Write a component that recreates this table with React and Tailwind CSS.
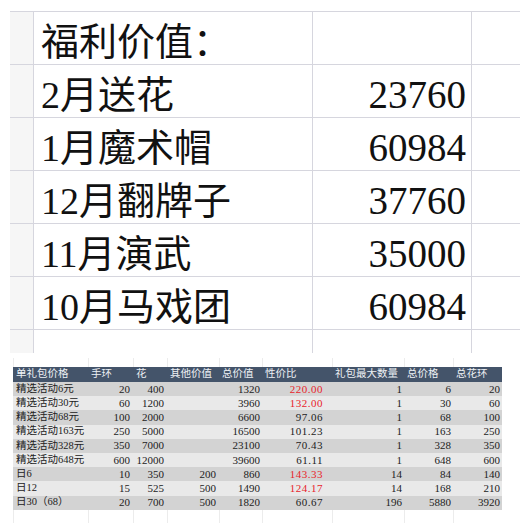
import React from 'react'

const welfare = [
  { name: '福利价值：', value: '' },
  { name: '2月送花', value: '23760' },
  { name: '1月魔术帽', value: '60984' },
  { name: '12月翻牌子', value: '37760' },
  { name: '11月演武', value: '35000' },
  { name: '10月马戏团', value: '60984' },
]

const headers = ['单礼包价格', '手环', '花', '其他价值', '总价值', '性价比', '礼包最大数量', '总价格', '总花环']

const rows = [
  ['精选活动6元', '20', '400', '', '1320', '220.00', '1', '6', '20', true],
  ['精选活动30元', '60', '1200', '', '3960', '132.00', '1', '30', '60', true],
  ['精选活动68元', '100', '2000', '', '6600', '97.06', '1', '68', '100', false],
  ['精选活动163元', '250', '5000', '', '16500', '101.23', '1', '163', '250', false],
  ['精选活动328元', '350', '7000', '', '23100', '70.43', '1', '328', '350', false],
  ['精选活动648元', '600', '12000', '', '39600', '61.11', '1', '648', '600', false],
  ['日6', '10', '350', '200', '860', '143.33', '14', '84', '140', true],
  ['日12', '15', '525', '500', '1490', '124.17', '14', '168', '210', true],
  ['日30（68）', '20', '700', '500', '1820', '60.67', '196', '5880', '3920', false],
]

const cols = 'grid grid-cols-[75px_45px_34px_52px_43px_70px_72px_49px_49px]'
const num = "font-['Times_New_Roman','Liberation_Serif',serif] text-right text-[11px]"

function FaintRow({ h }) {
  return (
    <div className={`${cols} ${h}`}>
      {headers.map((_, i) => (
        <div key={i} className="border-l border-[#ececec]" />
      ))}
    </div>
  )
}

export default function App() {
  return (
    <div className="w-[520px] h-[523px] bg-white overflow-hidden text-[#111] font-['Liberation_Serif','Noto_Sans_CJK_SC',serif]">
      {/* Top sheet */}
      <div className="pt-[11px] pl-[10px]">
        <div className="border-t border-[#d6d6de]">
          {welfare.map((r) => (
            <div key={r.name} className="flex h-[53px] border-b border-[#d6d6de]">
              <div className="w-[24px] bg-[#f6f6f6] border-r border-[#d6d6de]" />
              <div className="w-[279px] border-r border-[#d6d6de] pl-[7px] pt-[11px] text-[38px] leading-[38px] whitespace-nowrap">
                {r.name}
              </div>
              <div className="w-[159px] border-r border-[#d6d6de] pr-[5px] pt-[11px] text-right text-[39px] leading-[38px] font-['Times_New_Roman','Liberation_Serif',serif]">
                {r.value}
              </div>
              <div className="flex-1" />
            </div>
          ))}
          <div className="flex h-[23px]">
            <div className="w-[24px] bg-[#f6f6f6] border-r border-[#d6d6de]" />
            <div className="w-[279px] border-r border-[#d6d6de]" />
            <div className="w-[159px] border-r border-[#d6d6de]" />
          </div>
        </div>
      </div>

      {/* Gift table */}
      <div className="ml-[13px] w-[489px] mt-[5px] text-[10.5px] leading-none">
        <FaintRow h="h-[9px]" />
        <div className={`${cols} h-[15px] bg-[#44546a] text-[#eef1f5] items-center`}>
          {headers.map((h) => (
            <div key={h} className="pl-[3px] whitespace-nowrap">{h}</div>
          ))}
        </div>
        {rows.map((r, i) => (
          <div
            key={r[0]}
            className={`${cols} h-[14.2px] items-center text-[#222] ${
              i % 2 === 0 ? 'bg-[#d3d3d3]' : 'bg-[#e9e9e9]'
            }`}
          >
            <div className="pl-[3px] whitespace-nowrap">{r[0]}</div>
            <div className={`${num} pr-[3px]`}>{r[1]}</div>
            <div className={`${num} pr-[3px]`}>{r[2]}</div>
            <div className={`${num} pr-[3px]`}>{r[3]}</div>
            <div className={`${num} pr-[2px]`}>{r[4]}</div>
            <div className={`${num} pr-[9px] tracking-[0.5px] ${r[9] ? 'text-[#e8232a]' : ''}`}>{r[5]}</div>
            <div className={`${num} pr-[2px]`}>{r[6]}</div>
            <div className={`${num} pr-[2px]`}>{r[7]}</div>
            <div className={`${num} pr-[2px]`}>{r[8]}</div>
          </div>
        ))}
        <FaintRow h="h-[13px]" />
      </div>
    </div>
  )
}
